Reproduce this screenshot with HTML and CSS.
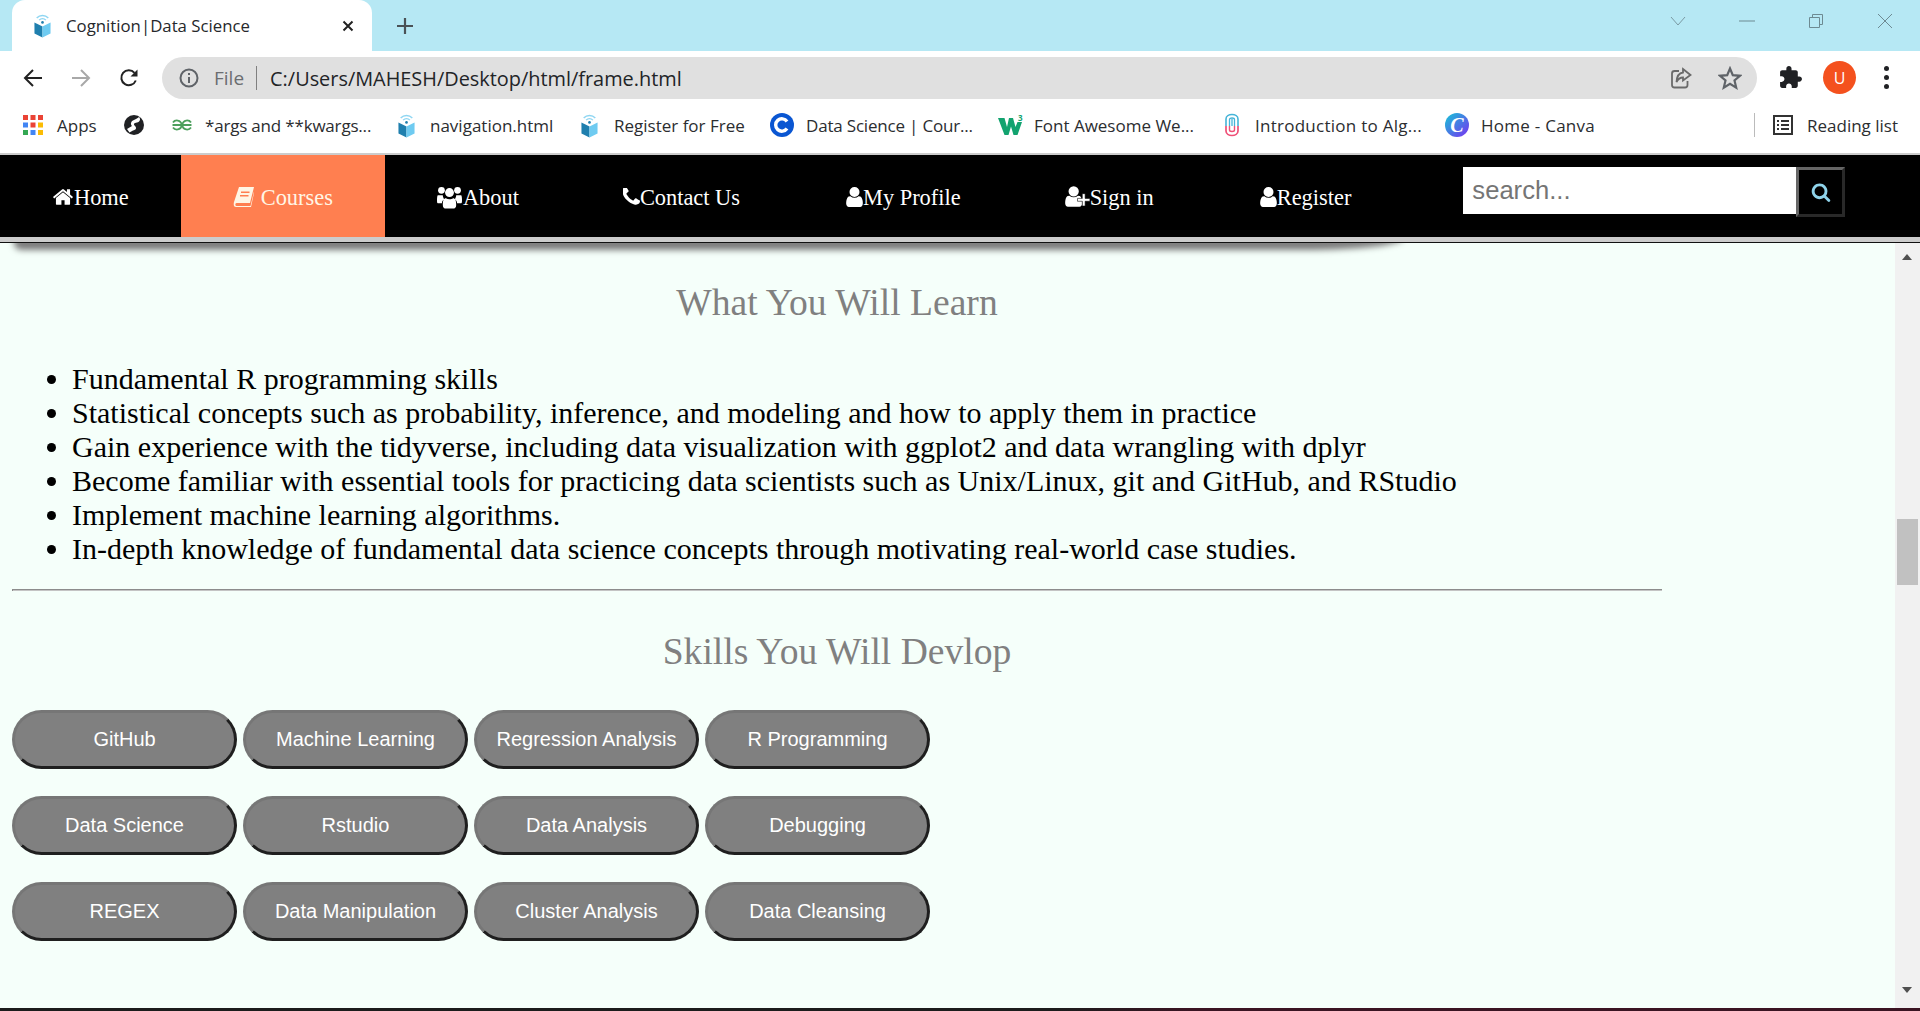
FILE: index.html
```html
<!DOCTYPE html>
<html lang="en">
<head>
<meta charset="utf-8">
<title>Cognition|Data Science</title>
<link rel="stylesheet" href="styles.css">
</head>
<body>
<svg class="defs" width="0" height="0">
  <symbol id="cube" viewBox="0 0 20 28">
    <path d="M1 10.500L10 15V27.500L1 23Z" fill="#1f7fae"/>
    <path d="M19 10.500L10 15V27.500L19 23Z" fill="#6fcbf1"/>
    <path d="M3.500 5.500C7 1.800 13 1.800 16.500 5.500" fill="none" stroke="#8fd6f2" stroke-width="1.600"/>
    <path d="M6.200 8C8.300 5.900 11.700 5.900 13.800 8" fill="none" stroke="#8fd6f2" stroke-width="1.500"/>
    <circle cx="10" cy="10.500" r="1.500" fill="#1f7fae"/>
  </symbol>
  <symbol id="user" viewBox="0 0 1792 1792">
    <path d="M1536 1399q0 109-62.500 187t-150.500 78h-854q-88 0-150.500-78t-62.500-187q0-85 8.500-160.500t31.500-152 58.500-131 94-89 134.500-34.500q131 128 313 128t313-128q76 0 134.500 34.500t94 89 58.500 131 31.500 152 8.500 160.500zm-256-887q0 159-112.500 271.500t-271.500 112.500-271.500-112.500-112.500-271.500 112.500-271.500 271.500-112.500 271.500 112.500 112.500 271.500z"/>
  </symbol>
</svg>
<div class="window">
  <header class="tabstrip">
    <div class="tab">
      <svg class="tab-logo"><use href="#cube"/></svg>
      <span class="tab-title">Cognition|Data Science</span>
      <svg class="tab-close" viewBox="0 0 12 12"><path d="M1.500 1.500L10.500 10.500M10.500 1.500L1.500 10.500" stroke="#222" stroke-width="2" fill="none"/></svg>
    </div>
    <svg class="new-tab" viewBox="0 0 18 18"><path d="M9 1V17M1 9H17" stroke="#4a5256" stroke-width="2.200" fill="none"/></svg>
    <div class="win-controls">
      <svg class="win-icon win-chevron" viewBox="0 0 16 16"><path d="M1 4L8 12L15 4" fill="none" stroke="#7a9aa3"/></svg>
      <svg class="win-icon win-min" viewBox="0 0 16 16"><path d="M0 8H16" fill="none" stroke="#6d8a92"/></svg>
      <svg class="win-icon win-max" viewBox="0 0 16 16"><path d="M1.500 4.500H11.500V14.500H1.500ZM4.500 4.500V1.500H14.500V11.500H11.500" fill="none" stroke="#6d8a92"/></svg>
      <svg class="win-icon win-x" viewBox="0 0 16 16"><path d="M1 1L15 15M15 1L1 15" fill="none" stroke="#6d8a92"/></svg>
    </div>
  </header>

  <div class="toolbar">
    <svg class="tool tool-back" viewBox="0 0 20 20"><path d="M19 10H2.500M10 2L2 10L10 18" fill="none" stroke="#222" stroke-width="2"/></svg>
    <svg class="tool tool-fwd" viewBox="0 0 20 20"><path d="M1 10H17.500M10 2L18 10L10 18" fill="none" stroke="#a8a8a8" stroke-width="2"/></svg>
    <svg class="tool tool-reload" viewBox="0 0 20 20"><path d="M16.800 12.500A7.500 7.500 0 1 1 15.500 4.800" fill="none" stroke="#222" stroke-width="2"/><path d="M18.500 1.500V8.500H11.500Z" fill="#222"/></svg>
    <div class="omnibox">
      <svg class="omni-info" viewBox="0 0 20 20"><circle cx="10" cy="10" r="8.500" fill="none" stroke="#5f6368" stroke-width="2"/><path d="M10 9V15M10 5V7" stroke="#5f6368" stroke-width="2" fill="none"/></svg>
      <span class="omni-file">File</span>
      <span class="omni-sep"></span>
      <span class="omni-url">C:/Users/MAHESH/Desktop/html/frame.html</span>
      <svg class="omni-share" viewBox="0 0 22 22"><path d="M9 4H4.500A2.500 2.500 0 0 0 2 6.500V18A2.500 2.500 0 0 0 4.500 20.500H15A2.500 2.500 0 0 0 17.500 18V14" fill="none" stroke="#6a6a6a" stroke-width="1.800"/><path d="M13 2L20.500 8L13 13.500V10.500C10 10.500 8 12 6.500 15C6.800 10 9 6 13 5.500Z" fill="none" stroke="#6a6a6a" stroke-width="1.800"/></svg>
      <svg class="omni-star" viewBox="0 0 24 24"><path d="M12 2.500L14.800 9.200L22 9.800L16.500 14.500L18.200 21.600L12 17.800L5.800 21.600L7.500 14.500L2 9.800L9.200 9.200Z" fill="none" stroke="#5f6368" stroke-width="2.200"/></svg>
    </div>
    <svg class="tool-puzzle" viewBox="0 0 24 24"><path fill="#202124" d="M20.500 11H19V7c0-1.100-.9-2-2-2h-4V3.500C13 2.120 11.880 1 10.500 1S8 2.120 8 3.500V5H4c-1.100 0-1.990.9-1.990 2v3.800H3.500c1.490 0 2.700 1.210 2.700 2.700s-1.210 2.700-2.700 2.700H2V20c0 1.100.9 2 2 2h3.800v-1.500c0-1.490 1.210-2.700 2.700-2.700 1.490 0 2.700 1.210 2.700 2.700V22H17c1.100 0 2-.9 2-2v-4h1.500c1.380 0 2.500-1.120 2.500-2.500S21.880 11 20.500 11z"/></svg>
    <span class="avatar">U</span>
    <span class="kebab"><i></i><i></i><i></i></span>
  </div>

  <nav class="bookmarks">
    <a class="bm bm-apps">
      <svg class="bm-grid" viewBox="0 0 20 20">
        <g fill="#ea4335"><rect x="0" y="0" width="5" height="5"/><rect x="7.500" y="0" width="5" height="5"/><rect x="15" y="0" width="5" height="5"/></g>
        <rect x="0" y="7.500" width="5" height="5" fill="#4285f4"/><rect x="7.500" y="7.500" width="5" height="5" fill="#ea4335"/><rect x="15" y="7.500" width="5" height="5" fill="#fbbc04"/>
        <rect x="0" y="15" width="5" height="5" fill="#34a853"/><rect x="7.500" y="15" width="5" height="5" fill="#4285f4"/><rect x="15" y="15" width="5" height="5" fill="#fbbc04"/>
      </svg>
      <span>Apps</span>
    </a>
    <a class="bm bm-globe">
      <svg class="bm-ico" viewBox="0 0 20 20"><circle cx="10" cy="10" r="10" fill="#202124"/><path d="M15 2C17 4 16 7 13 7.500C10 8 9 9 11 11C13 13 12 15 9 15.500L5.500 17.500L3 14L8 11C6 9 7 6 10 5C12 4 14 3 15 2Z" fill="#fff"/></svg>
    </a>
    <a class="bm bm-geeks">
      <svg class="bm-ico-wide" viewBox="0 0 22 14"><path d="M2 4.500C4 1.500 10 1.500 10.800 7C10 12.500 4 12.500 2 9.500M20 4.500C18 1.500 12 1.500 11.200 7C12 12.500 18 12.500 20 9.500M1.500 7H20.500" fill="none" stroke="#4c9f5c" stroke-width="1.800"/></svg>
      <span class="bm-tight">*args and **kwargs...</span>
    </a>
    <a class="bm bm-nav"><svg class="bm-cube"><use href="#cube"/></svg><span>navigation.html</span></a>
    <a class="bm bm-reg"><svg class="bm-cube"><use href="#cube"/></svg><span>Register for Free</span></a>
    <a class="bm bm-ds">
      <svg class="bm-ico-c" viewBox="0 0 24 24"><circle cx="12" cy="12" r="12" fill="#0a56d2"/><path d="M17 8.500A6.200 6.200 0 1 0 17 15.500" fill="none" stroke="#fff" stroke-width="3.400"/></svg>
      <span class="bm-tight">Data Science | Cour...</span>
    </a>
    <a class="bm bm-fa">
      <svg class="bm-ico-w" viewBox="0 0 26 22"><path d="M0 4H6.500L9 13L11 4H15L17.500 13L19.500 8H24L19.500 21H15.500L13 12.500L10.500 21H6.500Z" fill="#12a36f"/><text class="w3-mark" x="20" y="7">3</text></svg>
      <span>Font Awesome We...</span>
    </a>
    <a class="bm bm-intro">
      <svg class="bm-ico-i" viewBox="0 0 16 24"><path d="M2 13V6C2 3 5 1.500 8 1.500S14 3 14 6V13" fill="none" stroke="#45b4d8" stroke-width="1.600"/><path d="M5.500 13V6.500C5.500 4.500 10.500 4.500 10.500 6.500V13M8 6V13" fill="none" stroke="#45b4d8" stroke-width="1.300"/><path d="M2 13V18C2 21 5 22.500 8 22.500S14 21 14 18V13" fill="none" stroke="#ef4f77" stroke-width="1.700"/><path d="M5.500 13V17C5.500 19 10.500 19 10.500 17V13" fill="none" stroke="#ef4f77" stroke-width="1.400"/></svg>
      <span class="bm-loose">Introduction to Alg...</span>
    </a>
    <a class="bm bm-canva">
      <span class="canva">C</span>
      <span class="bm-loose">Home - Canva</span>
    </a>
    <span class="bm-spacer"></span>
    <span class="bm-sep"></span>
    <a class="bm bm-reading">
      <svg class="bm-ico" viewBox="0 0 20 20"><rect x="1" y="1" width="18" height="18" fill="none" stroke="#333" stroke-width="2"/><path d="M4 6H6M8 6H16M4 10H6M8 10H16M4 14H6M8 14H16" stroke="#333" stroke-width="2" fill="none"/></svg>
      <span>Reading list</span>
    </a>
  </nav>

  <nav class="site-nav">
    <a class="nav-item">
      <svg class="fa fa-home" viewBox="0 0 1792 1792"><path d="M1472 992v480q0 26-19 45t-45 19h-384v-384h-256v384h-384q-26 0-45-19t-19-45v-480q0-1 .5-3t.5-3l575-474 575 474q1 2 1 6zm223-69l-62 74q-8 9-21 11h-3q-13 0-21-7l-692-577-692 577q-12 8-24 7-13-2-21-11l-62-74q-8-10-7-23.500t11-21.500l719-599q32-26 76-26t76 26l244 204v-195q0-14 9-23t23-9h192q14 0 23 9t9 23v408l219 182q10 8 11 21.500t-7 23.500z"/></svg><span>Home</span>
    </a>
    <a class="nav-item nav-active">
      <svg class="fa fa-book" viewBox="0 0 22 22"><path d="M6 1H21L17 17H3.500C2 17 2 20 3.500 20H17.500L21 5.500V7L18 21H3C.5 21 .5 18 1 16ZM8 5.500V7H16.500V5.500ZM7 9V10.500H15.500V9Z" fill-rule="evenodd"/></svg><span class="nav-spaced">Courses</span>
    </a>
    <a class="nav-item">
      <svg class="fa fa-group" viewBox="0 0 28 26">
        <circle cx="5" cy="5.500" r="3.800"/><circle cx="23" cy="5.500" r="3.800"/><circle cx="14" cy="8" r="5"/>
        <path d="M1 11H6.500C6.500 13 7.500 14.500 8 15.500C6.500 16.500 5.500 18 5.500 20H1C0 20 0 18 0 16C0 13 .5 11 1 11ZM27 11H21.500C21.500 13 20.500 14.500 20 15.500C21.500 16.500 22.500 18 22.500 20H27C28 20 28 18 28 16C28 13 27.500 11 27 11ZM10 14.500C12 16 16 16 18 14.500C20.500 14.500 21.500 17 21.500 22C21.500 25 20 26 18 26H10C8 26 6.500 25 6.500 22C6.500 17 7.500 14.500 10 14.500Z"/>
      </svg><span>About</span>
    </a>
    <a class="nav-item nav-wide">
      <svg class="fa fa-phone" viewBox="256 256 1344 1344"><path d="M1600 1240q0 27-10 70.500t-21 68.500q-21 50-122 106-94 51-186 51-27 0-53-3.500t-57.500-12.500-47-14.500-55.500-20.500-49-18q-98-35-175-83-127-79-264-216t-216-264q-48-77-83-175-3-9-18-49t-20.500-55.500-14.500-47-12.500-57.500-3.500-53q0-92 51-186 56-101 106-122 25-11 68.500-21t70.500-10q14 0 21 3 18 6 53 76 11 19 30 54t35 63.500 31 53.500q3 4 17.500 25t21.500 35.500 7 28.500q0 20-28.500 50t-62 55-62 53-28.500 46q0 9 5 22.500t8.500 20.500 14 24 11.500 19q76 137 174 235t235 174q2 1 19 11.500t24 14 20.500 8.500 22.500 5q18 0 46-28.500t53-62 55-62 50-28.500q14 0 28.500 7t35.500 21.500 25 17.500q25 15 53.500 31t63.500 35 54 30q70 35 76 53 3 7 3 21z"/></svg><span>Contact Us</span>
    </a>
    <a class="nav-item"><svg class="fa fa-user" viewBox="256 128 1280 1536"><use href="#user" width="1792" height="1792"/></svg><span>My Profile</span></a>
    <a class="nav-item nav-wide">
      <svg class="fa fa-plus" viewBox="0 0 26 22"><svg x="0" y="0" width="18" height="22" viewBox="256 128 1280 1536"><use href="#user" width="1792" height="1792"/></svg><path d="M13 13H18V8H21V13H26V16H21V21H18V16H13Z" stroke="#000" stroke-width=".6"/></svg><span>Sign in</span>
    </a>
    <a class="nav-item"><svg class="fa fa-user" viewBox="256 128 1280 1536"><use href="#user" width="1792" height="1792"/></svg><span>Register</span></a>
    <form class="search">
      <input class="search-input" type="text" placeholder="search...">
      <button class="search-btn" type="button">
        <svg viewBox="0 0 1792 1792"><path d="M1216 832q0-185-131.500-316.500t-316.500-131.500-316.500 131.500-131.500 316.500 131.500 316.500 316.500 131.500 316.500-131.500 131.500-316.500zm512 832q0 52-38 90t-90 38q-54 0-90-38l-343-342q-179 124-399 124-143 0-273.500-55.500t-225-150-150-225-55.500-273.500 55.500-273.500 150-225 225-150 273.500-55.500 273.500 55.500 225 150 150 225 55.500 273.500q0 220-124 399l343 343q37 37 37 90z"/></svg>
      </button>
    </form>
  </nav>
  <div class="nav-rule"></div>

  <div class="viewport">
    <main class="page">
      <div class="nav-shadow"></div>
      <h2 class="section-title">What You Will Learn</h2>
      <ul class="learn-list">
        <li>Fundamental R programming skills</li>
        <li>Statistical concepts such as probability, inference, and modeling and how to apply them in practice</li>
        <li>Gain experience with the tidyverse, including data visualization with ggplot2 and data wrangling with dplyr</li>
        <li>Become familiar with essential tools for practicing data scientists such as Unix/Linux, git and GitHub, and RStudio</li>
        <li>Implement machine learning algorithms.</li>
        <li>In-depth knowledge of fundamental data science concepts through motivating real-world case studies.</li>
      </ul>
      <hr class="divider">
      <h2 class="section-title section-skills">Skills You Will Devlop</h2>
      <div class="skills">
        <button class="skill" type="button">GitHub</button>
        <button class="skill" type="button">Machine Learning</button>
        <button class="skill" type="button">Regression Analysis</button>
        <button class="skill" type="button">R Programming</button>
        <button class="skill" type="button">Data Science</button>
        <button class="skill" type="button">Rstudio</button>
        <button class="skill" type="button">Data Analysis</button>
        <button class="skill" type="button">Debugging</button>
        <button class="skill" type="button">REGEX</button>
        <button class="skill" type="button">Data Manipulation</button>
        <button class="skill" type="button">Cluster Analysis</button>
        <button class="skill" type="button">Data Cleansing</button>
      </div>
    </main>
    <div class="scrollbar">
      <span class="arrow arrow-up"></span>
      <span class="thumb"></span>
      <span class="arrow arrow-down"></span>
    </div>
  </div>
  <div class="taskbar-edge"></div>
</div>
</body>
</html>
```
FILE: styles.css
```css
* { box-sizing: border-box; }
html, body { margin: 0; padding: 0; height: 100%; overflow: hidden; }
body { font-family: "Liberation Serif", serif; background: #fff; }
.defs { position: absolute; }
.window { height: 1011px; display: flex; flex-direction: column; }

/* tab strip */
.tabstrip { height: 51px; flex: none; background: #b6e8f4; display: flex; align-items: flex-start; padding-left: 12px; }
.tab { width: 360px; height: 51px; background: #fff; border-radius: 13px 13px 0 0; display: flex; align-items: center; padding-left: 21px; }
.tab-logo { width: 19px; height: 25px; flex: none; }
.tab-title { font: 16.800px "Open Sans", sans-serif; color: #26282b; margin-left: 14px; width: 276px; white-space: nowrap; }
.tab-close { width: 12px; height: 12px; flex: none; }
.new-tab { width: 18px; height: 18px; margin: 17px 0 0 24px; flex: none; }
.win-controls { margin-left: auto; position: relative; width: 260px; height: 51px; display: flex; padding: 13px 27px 0 0; justify-content: flex-end; }
.win-icon { width: 16px; height: 16px; flex: none; }
.win-chevron { margin-right: 53px; }
.win-min { margin-right: 53px; }
.win-max { margin-right: 53px; }

/* toolbar */
.toolbar { height: 48px; flex: none; display: flex; align-items: flex-end; padding-left: 23px; background: #fff; }
.tool { width: 20px; height: 20px; flex: none; margin-bottom: 11px; }
.tool-fwd { margin-left: 28px; }
.tool-reload { margin-left: 28px; }
.omnibox { width: 1595px; height: 42px; margin-left: 23px; background: #e0e0e0; border-radius: 21px; display: flex; align-items: center; padding-left: 17px; flex: none; }
.omni-info { width: 20px; height: 20px; flex: none; }
.omni-file { font: 19px "Open Sans", sans-serif; color: #6b6d70; margin-left: 15px; }
.omni-sep { width: 1px; height: 24px; background: #808080; margin-left: 12px; }
.omni-url { font: 19.900px "Open Sans", sans-serif; color: #222427; margin-left: 13px; }
.omni-share { width: 22px; height: 22px; margin-left: auto; flex: none; }
.omni-star { width: 24px; height: 24px; margin: 0 15px 0 26px; flex: none; }
.tool-puzzle { width: 25px; height: 25px; margin: 0 0 9px 21px; flex: none; }
.avatar { width: 33px; height: 33px; border-radius: 50%; background: #f4511e; color: #fff; font: 16px "Open Sans", sans-serif; display: flex; align-items: center; justify-content: center; margin: 0 0 5px 20px; flex: none; }
.kebab { width: 6px; display: flex; flex-direction: column; gap: 4px; margin: 0 0 10px 28px; }
.kebab i { width: 5px; height: 5px; border-radius: 50%; background: #202124; }

/* bookmarks */
.bookmarks { height: 56px; flex: none; display: flex; align-items: center; padding: 0 0 2px 23px; border-bottom: 2px solid #ccc; background: #fff; font: 17px "Open Sans", sans-serif; color: #2b2d30; }
.bm { display: flex; align-items: center; gap: 12px; flex: none; white-space: nowrap; }
.bm-apps { width: 101px; gap: 14px; }
.bm-globe { width: 47px; }
.bm-geeks { width: 226px; }
.bm-nav { width: 183px; gap: 14px; }
.bm-reg { width: 190px; gap: 15px; }
.bm-ds { width: 228px; }
.bm-fa { width: 226px; gap: 10px; }
.bm-intro { width: 221px; gap: 15px; }
.bm-tight { letter-spacing: -0.190px; }
.bm-loose { letter-spacing: 0.260px; }
.bm-grid { width: 20px; height: 20px; }
.bm-ico { width: 20px; height: 20px; flex: none; }
.bm-ico-wide { width: 22px; height: 14px; flex: none; }
.bm-cube { width: 19px; height: 25px; flex: none; }
.bm-ico-c { width: 24px; height: 24px; flex: none; }
.bm-ico-w { width: 26px; height: 22px; flex: none; }
.bm-ico-i { width: 16px; height: 24px; flex: none; }
.w3-mark { font: 700 8px "Open Sans", sans-serif; fill: #12a36f; }
.canva { width: 24px; height: 24px; border-radius: 50%; background: linear-gradient(135deg, #14c6d6, #7a2ff2); color: #fff; font: italic 700 20px "Liberation Serif", serif; display: flex; align-items: center; justify-content: center; flex: none; }
.bm-spacer { flex: 1; }
.bm-sep { width: 1px; height: 24px; background: #bbb; margin-right: 18px; }
.bm-reading { margin-right: 22px; gap: 14px; }

/* site navigation */
.site-nav { height: 82px; flex: none; background: #000; display: flex; align-items: stretch; }
.nav-item { display: flex; align-items: center; padding: 4px 52px 0; color: #fff; font-size: 22.400px; white-space: nowrap; }
.nav-wide { padding-right: 54px; }
.nav-active { background: #ff7f50; color: #fff6e5; }
.fa { fill: currentColor; flex: none; margin-bottom: 3px; }
.fa-home { width: 22px; height: 22px; }
.fa-book { width: 22px; height: 22px; }
.nav-spaced { margin-left: 6px; }
.fa-group { width: 26px; height: 24px; padding-right: 1px; }
.fa-phone { width: 17px; height: 18px; }
.fa-user { width: 17px; height: 20px; }
.fa-plus { width: 25px; height: 21px; }
.search { display: flex; align-items: flex-start; margin: 12px 0 0 60px; }
.search-input { width: 333px; height: 47px; border: 0; padding: 0 9px; background: #fff; font: 25.600px "Liberation Sans", sans-serif; outline: 0; border-radius: 0; }
.search-input::placeholder { color: #757575; }
.search-btn { width: 49px; height: 50px; background: #000; border: 3px solid; border-color: #666 #292929 #292929 #666; display: flex; align-items: center; justify-content: center; padding: 0; }
.search-btn svg { width: 20px; height: 20px; fill: #8fd3ea; }
.nav-rule { height: 6px; flex: none; background: #ccc; border-bottom: 1px solid #111; }

/* page */
.viewport { height: 765px; flex: none; display: flex; }
.page { flex: 1; background: #f5fffa; position: relative; overflow: hidden; padding: 39px 0 0 12px; }
.nav-shadow { position: absolute; left: 14px; top: -12px; width: 1390px; height: 12px; border-radius: 0 0 100px 8px / 0 0 12px 6px; box-shadow: 0 7px 6px #7a7a7a; }
.section-title { width: 1650px; margin: 0; text-align: center; font-weight: 400; font-size: 37.600px; line-height: 42px; color: #808080; }
.learn-list { margin: 38px 0 0; padding: 0 0 0 60px; font-size: 30px; line-height: 34px; color: #000; width: 1650px; }
.divider { width: 1650px; margin: 23px 0 0; border: 0; border-top: 1px solid #8c8c8c; border-left: 1px solid #8c8c8c; height: 2px; background: #c4c4c4; }
.section-skills { margin-top: 40px; }
.skills { display: grid; grid-template-columns: repeat(4, 225px); column-gap: 6px; row-gap: 27px; margin-top: 37px; }
.skill { height: 59px; border-radius: 30px; background: #808080; color: #fff; font: 20px "Liberation Sans", sans-serif; border: 3px solid; border-color: #767676 #1f1f1f #1f1f1f #767676; padding: 0; }
.scrollbar { width: 25px; flex: none; background: #f1f1f1; position: relative; }
.arrow { position: absolute; left: 7px; width: 0; height: 0; border-left: 5.500px solid transparent; border-right: 5.500px solid transparent; }
.arrow-up { top: 11px; border-bottom: 6px solid #505050; }
.arrow-down { bottom: 15px; border-top: 6px solid #505050; }
.thumb { position: absolute; left: 2px; top: 276px; width: 21px; height: 66px; background: #c1c1c1; }
.taskbar-edge { height: 3px; flex: none; background: linear-gradient(90deg, #1c1c1c 0, #1c1c1c 55%, #3a1422 62%, #3a1422 100%); }
```
